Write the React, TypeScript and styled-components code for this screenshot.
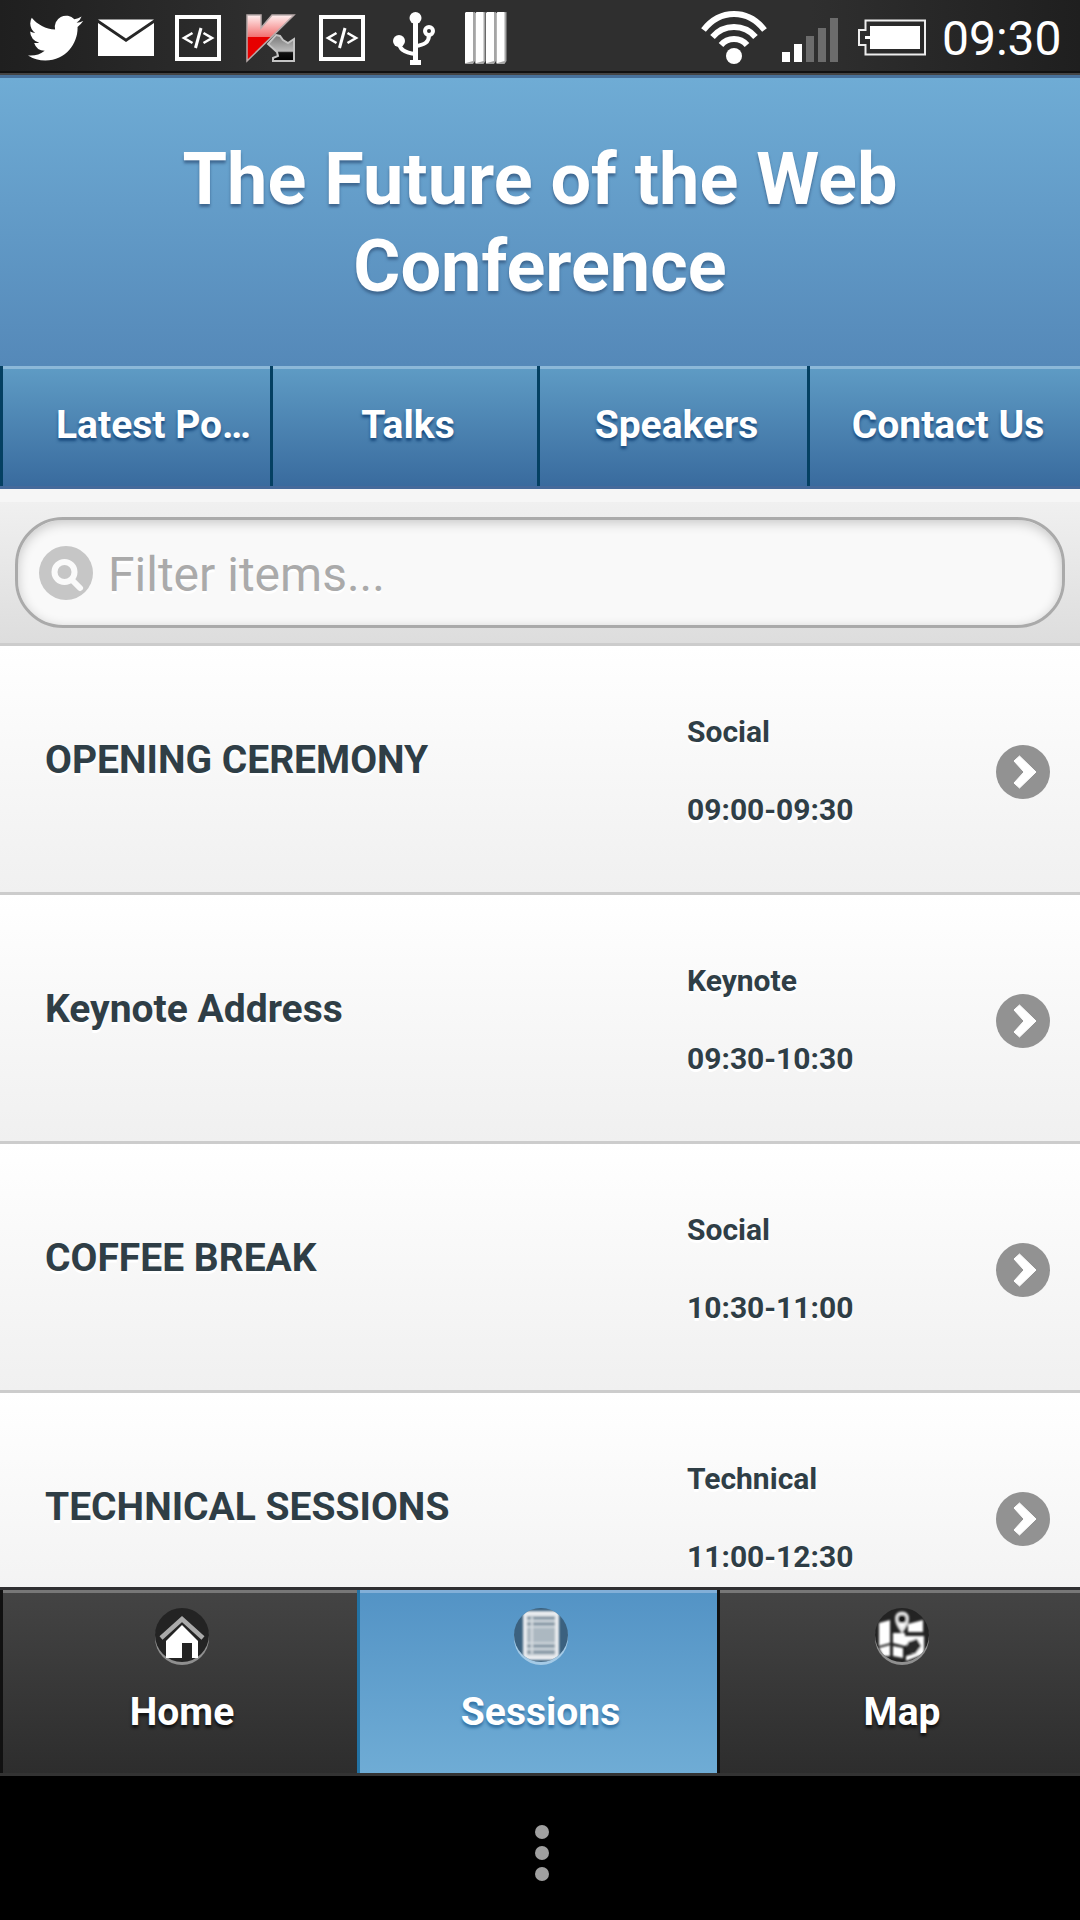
import React from "react";
import styled, { createGlobalStyle, css } from "styled-components";

const GlobalStyle = createGlobalStyle`
  *, *::before, *::after { box-sizing: border-box; }
  html, body, #root { height: 100%; }
  body {
    margin: 0;
    background: #000;
    font-family: Roboto, "Liberation Sans", sans-serif;
  }
  h1, h2, p, ul { margin: 0; padding: 0; }
`;

const Screen = styled.div`
  display: flex;
  flex-direction: column;
  height: 100vh;
  overflow: hidden;
`;

const StatusBar = styled.div`
  display: flex;
  flex: none;
  align-items: flex-start;
  justify-content: space-between;
  height: 75px;
  background: linear-gradient(90deg, #1f1f1f, #2f2f2f 25%, #2f2f2f 75%, #1f1f1f);
  border-bottom: 2px solid #444;
  box-shadow: inset 0 -2px 0 #111;
`;

const StatusIcon = styled.svg`
  display: block;
  flex: none;
  height: 72px;
`;

const StatusEnd = styled.div`
  display: flex;
`;

const Clock = styled.time`
  width: 140px;
  padding: 8px 0 0 2px;
  color: #fff;
  font-size: 48px;
  line-height: 62px;
`;

const Header = styled.header`
  flex: none;
  border-top: 3px solid #47719b;
  border-bottom: 3px solid #456a9b;
  background: linear-gradient(#6facd5, #4a7aad);
`;

const Title = styled.h1`
  padding: 58px 140px 56px;
  color: #fff;
  font-size: 72px;
  font-weight: 700;
  line-height: 87px;
  text-align: center;
  text-shadow: 0 3px 3px #3e6790;
`;

const TopNav = styled.nav`
  display: grid;
  grid-template-columns: 90fr 89fr 90fr 91fr;
  height: 120px;
`;

const TopLink = styled.a<{ $lead?: boolean }>`
  padding: 0 0 0 ${(p) => (p.$lead ? 34 : 6)}px;
  border-left: 3px solid #044062;
  background: linear-gradient(#5f9cc5, #396b9e);
  box-shadow: inset 0 3px 0 #8cb8d8;
  color: #fff;
  font-size: 39px;
  font-weight: 700;
  line-height: 118px;
  text-align: center;
  text-decoration: none;
  text-shadow: 0 3px 3px #194b7e;
  white-space: nowrap;
`;

const Content = styled.main`
  flex: 1;
  min-height: 0;
  overflow: hidden;
  padding-top: 13px;
  background: #f6f6f6;
`;

const FilterBar = styled.form`
  padding: 15px;
  border-bottom: 3px solid #ccc;
  background: linear-gradient(#f0f0f0, #ddd);
`;

const FilterField = styled.label`
  display: flex;
  align-items: center;
  gap: 15px;
  height: 111px;
  padding: 0 21px;
  border: 3px solid #aaa;
  border-radius: 48px;
  background: #f9f9f9;
  box-shadow: inset 0 3px 12px rgba(0, 0, 0, 0.2);
`;

const FilterInput = styled.input`
  flex: 1;
  min-width: 0;
  height: 72px;
  padding: 4px 0 0;
  border: 0;
  outline: 0;
  background: transparent;
  color: #333;
  font: 400 48px/60px Roboto, "Liberation Sans", sans-serif;
  text-shadow: 0 3px 0 #fff;
  &::placeholder { color: #aaa; opacity: 1; }
`;

const SessionList = styled.ul`
  list-style: none;
`;

const Session = styled.li`
  border-bottom: 3px solid #ccc;
`;

const SessionLink = styled.a`
  display: grid;
  grid-template-columns: 642px 1fr 54px;
  height: 246px;
  padding: 0 30px 0 45px;
  background: linear-gradient(#fff, #f0f0f0);
  color: #2f3e46;
  text-decoration: none;
  text-shadow: 0 3px 0 #fff;
`;

const SessionTitle = styled.h2`
  padding-top: 90px;
  font-size: 39px;
  font-weight: 700;
  line-height: 48px;
`;

const SessionMeta = styled.div`
  display: flex;
  flex-direction: column;
  gap: 42px;
  padding-top: 68px;
  font-size: 30px;
  font-weight: 700;
  line-height: 36px;
`;

const RoundIcon = styled.svg`
  display: block;
  flex: none;
  width: 54px;
  height: 54px;
`;

const ArrowSlot = styled.span`
  padding-top: 99px;
`;

const TabBar = styled.nav`
  display: grid;
  flex: none;
  grid-template-columns: 119fr 120fr 121fr;
  border-top: 3px solid #2f2f31;
  border-bottom: 3px solid #333;
  background: #333;
`;

const darkTab = css`
  border-left: 3px solid #111;
  background: linear-gradient(#444, #2d2d2d);
  box-shadow: inset 0 3px 0 #777;
  text-shadow: 0 3px 3px #111;
`;

const activeTab = css`
  border-left: 3px solid #2373a5;
  background: linear-gradient(#5393c5, #6facd5);
  box-shadow: inset 0 3px 0 #82afd8;
  text-shadow: 0 3px 3px #3373a5;
`;

const Tab = styled.a<{ $active?: boolean }>`
  display: flex;
  flex-direction: column;
  align-items: center;
  gap: 23px;
  height: 183px;
  padding: 18px 0 0 4px;
  color: #fff;
  font-size: 39px;
  font-weight: 700;
  line-height: 48px;
  text-decoration: none;
  ${(p) => (p.$active ? activeTab : darkTab)}
`;

const TabIcon = styled.svg`
  display: block;
  width: 54px;
  height: 57px;
`;

const SystemBar = styled.div`
  display: flex;
  flex: none;
  align-items: center;
  justify-content: center;
  height: 144px;
  background: #000;
`;

const MenuButton = styled.button`
  display: flex;
  flex-direction: column;
  gap: 7px;
  padding: 10px 0 0 4px;
  border: 0;
  background: none;
`;

const Dot = styled.span`
  width: 14px;
  height: 14px;
  border-radius: 50%;
  background: #a0a0a0;
`;

const NotificationIcons = () => (
  <StatusIcon width="520" viewBox="0 0 520 72" aria-hidden="true">
    <defs>
      <linearGradient id="kred" x1="0" y1="0" x2="0" y2="1">
        <stop offset="0" stopColor="#fff0f0" />
        <stop offset=".47" stopColor="#f27272" />
        <stop offset=".48" stopColor="#e60000" />
        <stop offset="1" stopColor="#e80000" />
      </linearGradient>
      <linearGradient id="kgray" x1="0" y1="0" x2="0" y2="1">
        <stop offset="0" stopColor="#777" />
        <stop offset=".62" stopColor="#bbb" />
        <stop offset=".68" stopColor="#111" />
        <stop offset="1" stopColor="#000" />
      </linearGradient>
    </defs>
    <g transform="translate(28 10.5) scale(2.3)">
      <path
        fill="#fff"
        d="M23.953 4.57a10 10 0 01-2.825.775 4.958 4.958 0 002.163-2.723c-.951.555-2.005.959-3.127 1.184a4.92 4.92 0 00-8.384 4.482C7.69 8.095 4.067 6.13 1.64 3.162a4.822 4.822 0 00-.666 2.475c0 1.71.87 3.213 2.188 4.096a4.904 4.904 0 01-2.228-.616v.06a4.923 4.923 0 003.946 4.827 4.996 4.996 0 01-2.212.085 4.936 4.936 0 004.604 3.417 9.867 9.867 0 01-6.102 2.105c-.39 0-.779-.023-1.17-.067a13.995 13.995 0 007.557 2.209c9.053 0 13.998-7.496 13.998-13.985 0-.21 0-.42-.015-.63A9.935 9.935 0 0024 4.59z"
      />
    </g>
    <path fill="#fff" d="M98 19.500H154L126 38.500Z M98 23L126 42L154 23V56H98Z" />
    {[175, 319].map((x) => (
      <g key={x} transform={`translate(${x} 15)`} fill="none" stroke="#fff">
        <rect x="2" y="2" width="42" height="42" strokeWidth="4" />
        <path d="M17.500 18L9 23L17.500 28M28.500 18L37 23L28.500 28" strokeWidth="2.600" />
        <path d="M26 13L20.500 33" strokeWidth="3" />
      </g>
    ))}
    <path
      d="M276 35L280 36L283 40L288 43L294 39V61H273V58L278 56L277 52L268 44Z"
      fill="url(#kgray)"
      stroke="#c4c4c4"
      strokeWidth="2"
    />
    <path d="M247 15H261V28L272 15H294L247 61Z" fill="url(#kred)" stroke="#b8aaaa" strokeWidth="1.500" />
    <g fill="none" stroke="#fff" strokeWidth="4">
      <path d="M415.500 18V62" strokeWidth="5" />
      <path d="M399 42C399 50 406 53 415 54" />
      <path d="M415 46C425 45 429 42 429 35" />
      <circle cx="429" cy="31" r="4" />
    </g>
    <circle cx="415.500" cy="18" r="6" fill="#fff" />
    <circle cx="399" cy="41" r="6" fill="#fff" />
    <path d="M410 60H421V65H410Z" fill="#fff" />
    {[465, 475.500, 486, 496.500].map((x) => (
      <g key={x}>
        <path d={`M${x} 13L${x + 10} 12V61L${x + 8} 64H${x}Z`} fill="#a5a5a5" />
        <path d={`M${x} 13L${x + 1} 12H${x + 8}V61L${x + 1} 63H${x}Z`} fill="#fff" />
      </g>
    ))}
  </StatusIcon>
);

const SignalIcons = () => (
  <StatusIcon width="240" viewBox="0 0 240 72" aria-hidden="true">
    <g transform="translate(-700 0)">
      <g fill="none" stroke="#fff" strokeWidth="6">
        <path d="M703.500 30Q716 14 734 14Q752 14 764.500 30" />
        <path d="M712.500 37Q721 27 734 27Q747 27 755.500 37" />
        <path d="M721 45Q726 39 734 39Q742 39 747 45" />
      </g>
      <circle cx="734" cy="56" r="8" fill="#fff" />
      <path d="M782 52H790V62H782ZM794 44H802V62H794Z" fill="#fff" />
      <path d="M806 36H814V62H806ZM818 28H826V62H818ZM830 18H838V62H830Z" fill="#6c6c6c" />
      <path
        d="M865.500 20.500H925V54.500H865.500V45H859V30H865.500Z"
        fill="none"
        stroke="#eee"
        strokeWidth="2"
      />
      <path d="M870 26H920V49H870V39H865V36H870Z" fill="#fff" />
    </g>
  </StatusIcon>
);

const SearchIcon = () => (
  <RoundIcon viewBox="0 0 54 54" aria-hidden="true">
    <circle cx="27" cy="27" r="27" fill="#c6c6c6" />
    <circle cx="25.500" cy="26" r="10" fill="none" stroke="#fafafa" strokeWidth="6" />
    <path d="M33 34L41 42" stroke="#fafafa" strokeWidth="6" strokeLinecap="round" />
  </RoundIcon>
);

const ArrowIcon = () => (
  <RoundIcon viewBox="0 0 54 54" aria-hidden="true">
    <circle cx="27" cy="27" r="27" fill="#929292" />
    <path d="M18 16L23.500 11L40 27L23.500 43L18 38L28 27Z" fill="#fff" stroke="#fff" strokeWidth="1" strokeLinejoin="round" />
  </RoundIcon>
);

const HomeIcon = () => (
  <TabIcon viewBox="0 0 54 57" aria-hidden="true">
    <circle cx="27" cy="30" r="27" fill="#8f8f8f" />
    <circle cx="27" cy="27" r="27" fill="#232323" />
    <path d="M27 17L43 33V50H37V35H27V50H11V33Z" fill="#fff" />
    <path d="M6 30L27 11L48 30" fill="none" stroke="#aaa" strokeWidth="4.500" />
  </TabIcon>
);

const ListIcon = () => (
  <TabIcon viewBox="0 0 54 57" aria-hidden="true">
    <defs>
      <clipPath id="listClip"><circle cx="27" cy="27" r="27" /></clipPath>
      <filter id="listSoft"><feGaussianBlur stdDeviation="0.8" /></filter>
    </defs>
    <circle cx="27" cy="30" r="27" fill="#a4cae6" />
    <circle cx="27" cy="27" r="27" fill="#3b617f" />
    <g clipPath="url(#listClip)">
      <g filter="url(#listSoft)">
        <rect x="9" y="3" width="36" height="49" fill="#e8ebee" />
        <rect x="13" y="8" width="28" height="39" fill="#acb8c1" />
        <path d="M13 10H41M13 16H41M13 38H41M13 44H41" stroke="#7b8f9d" strokeWidth="2" />
        <path d="M13 13H41M13 19H41M13 35H41M13 41H41" stroke="#ccd4da" strokeWidth="2" />
        <path d="M18 9V46" stroke="#d5dbe0" strokeWidth="2" />
      </g>
    </g>
  </TabIcon>
);

const MapIcon = () => (
  <TabIcon viewBox="0 0 54 57" aria-hidden="true">
    <defs>
      <clipPath id="mapClip"><circle cx="27" cy="27" r="27" /></clipPath>
      <filter id="mapSoft"><feGaussianBlur stdDeviation="0.8" /></filter>
    </defs>
    <circle cx="27" cy="30" r="27" fill="#8f8f8f" />
    <circle cx="27" cy="27" r="27" fill="#232323" />
    <g clipPath="url(#mapClip)">
      <g filter="url(#mapSoft)">
        <path
          d="M4 15L15 12V35L4 38Z M4 40L15 37V48H8Z M18 25H30V38L18 35Z M18 38L28 40V50L18 48Z M33 16L48 12V24H33Z M29 28H49V46L31 53V48L38 46L46 38L41 31L30 38Z"
          fill="#fff"
        />
        <path d="M21.500 11Q21.500 5 27 5Q32.500 5 32.500 11Q32.500 16 27 23Q21.500 16 21.500 11Z" fill="#fff" stroke="#e4e4e4" strokeWidth="3" />
        <circle cx="27" cy="11" r="4" fill="#161616" />
        <path d="M33 34L42 31L46 38L40 46L32 42Z" fill="#292929" />
      </g>
    </g>
  </TabIcon>
);

const sessions = [
  { title: "OPENING CEREMONY", kind: "Social", time: "09:00-09:30" },
  { title: "Keynote Address", kind: "Keynote", time: "09:30-10:30" },
  { title: "COFFEE BREAK", kind: "Social", time: "10:30-11:00" },
  { title: "TECHNICAL SESSIONS", kind: "Technical", time: "11:00-12:30" },
];

export default function App() {
  return (
    <>
      <GlobalStyle />
      <Screen>
        <StatusBar>
          <NotificationIcons />
          <StatusEnd>
            <SignalIcons />
            <Clock>09:30</Clock>
          </StatusEnd>
        </StatusBar>
        <Header>
          <Title>The Future of the Web Conference</Title>
          <TopNav aria-label="Sections">
            <TopLink href="#posts" $lead>Latest Po…</TopLink>
            <TopLink href="#talks">Talks</TopLink>
            <TopLink href="#speakers">Speakers</TopLink>
            <TopLink href="#contact">Contact Us</TopLink>
          </TopNav>
        </Header>
        <Content>
          <FilterBar onSubmit={(e) => e.preventDefault()}>
            <FilterField htmlFor="filter">
              <SearchIcon />
              <FilterInput id="filter" type="text" placeholder="Filter items..." aria-label="Filter items" />
            </FilterField>
          </FilterBar>
          <SessionList>
            {sessions.map((s) => (
              <Session key={s.title}>
                <SessionLink href="#session">
                  <SessionTitle>{s.title}</SessionTitle>
                  <SessionMeta>
                    <p>{s.kind}</p>
                    <p>{s.time}</p>
                  </SessionMeta>
                  <ArrowSlot>
                    <ArrowIcon />
                  </ArrowSlot>
                </SessionLink>
              </Session>
            ))}
          </SessionList>
        </Content>
        <TabBar aria-label="Main">
          <Tab href="#home"><HomeIcon />Home</Tab>
          <Tab href="#sessions" $active aria-current="page"><ListIcon />Sessions</Tab>
          <Tab href="#map"><MapIcon />Map</Tab>
        </TabBar>
        <SystemBar>
          <MenuButton type="button" aria-label="More options">
            <Dot /><Dot /><Dot />
          </MenuButton>
        </SystemBar>
      </Screen>
    </>
  );
}
